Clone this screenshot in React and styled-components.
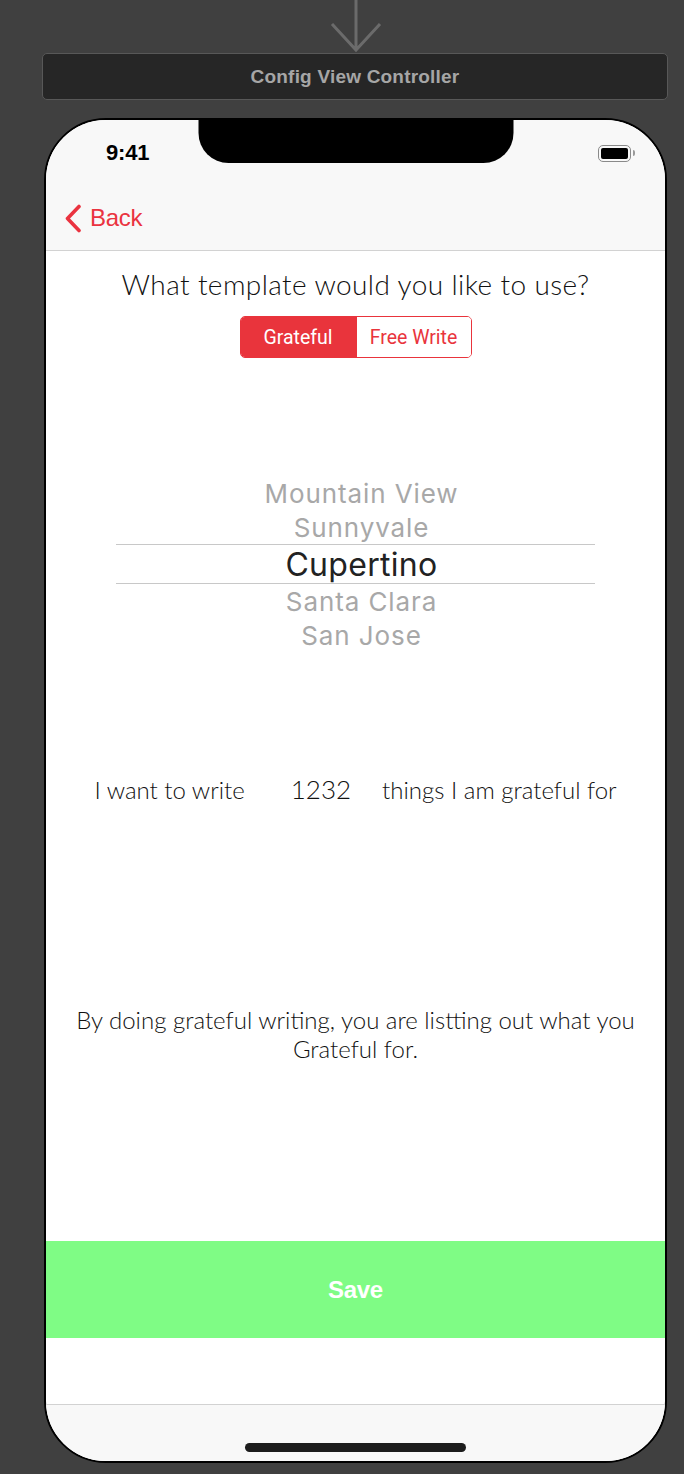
import React from 'react'
import styled, { createGlobalStyle } from 'styled-components'

const GlobalStyle = createGlobalStyle`
  html, body {
    margin: 0;
    padding: 0;
    background: #404040;
  }
  * { box-sizing: border-box; }
`;

const Canvas = styled.div`
  width: 684px;
  height: 1474px;
  display: flex;
  flex-direction: column;
  align-items: flex-start;
  padding-left: 42px;
  background: #404040;
  overflow: hidden;
`;

const ArrowWrap = styled.div`
  height: 53px;
  width: 626px;
  display: flex;
  justify-content: center;
  padding-left: 1px;
`;

const SceneTitle = styled.div`
  width: 626px;
  height: 47px;
  background: #262626;
  border: 1.5px solid #585858;
  border-radius: 5px;
  display: flex;
  align-items: center;
  justify-content: center;
  font-family: "Liberation Sans", Arial, sans-serif;
  font-weight: 700;
  font-size: 19px;
  letter-spacing: 0.2px;
  color: #a6a6a6;
`;

const Phone = styled.div`
  position: relative;
  margin-top: 18px;
  margin-left: 2px;
  width: 623px;
  height: 1345px;
  border: 2px solid #000;
  border-radius: 62px;
  background: #fff;
  overflow: hidden;
  display: flex;
  flex-direction: column;
`;

const Notch = styled.div`
  position: absolute;
  top: -2px;
  left: 50%;
  transform: translateX(-50%);
  width: 315px;
  height: 45px;
  background: #000;
  border-radius: 0 0 30px 30px;
`;

const Header = styled.header`
  background: #f8f8f8;
  border-bottom: 1px solid #d2d2d2;
  display: flex;
  flex-direction: column;
`;

const StatusBar = styled.div`
  height: 66px;
  display: flex;
  align-items: center;
  justify-content: space-between;
  padding: 0 34px 0 60px;
`;

const Time = styled.span`
  font-family: "Liberation Sans", Arial, sans-serif;
  font-weight: 700;
  font-size: 22px;
  color: #000;
  letter-spacing: -0.2px;
`;

const Battery = styled.div`
  position: relative;
  width: 33px;
  height: 17px;
  border: 1.5px solid #8a8a8a;
  border-radius: 5px;
  padding: 2px;
  &::after {
    content: '';
    position: absolute;
    right: -5px;
    top: 4px;
    width: 2px;
    height: 6px;
    border-radius: 0 2px 2px 0;
    background: #9a9a9a;
  }
`;

const BatteryFill = styled.div`
  width: 100%;
  height: 100%;
  background: #000;
  border-radius: 2px;
`;

const NavBar = styled.div`
  height: 64px;
  display: flex;
  align-items: center;
  padding-left: 18px;
`;

const BackButton = styled.div`
  display: flex;
  align-items: center;
  gap: 8px;
  color: #ea3340;
  font-family: "Liberation Sans", Arial, sans-serif;
  font-size: 24px;
  letter-spacing: -0.3px;
`;

const Main = styled.main`
  flex: 1;
  display: flex;
  flex-direction: column;
  align-items: center;
  padding-top: 17px;
`;

const Question = styled.h2`
  margin: 0;
  font-family: "Lato", "Liberation Sans", sans-serif;
  font-weight: 300;
  font-size: 28px;
  line-height: 32px;
  color: #111;
  letter-spacing: 0.4px;
`;

const Segmented = styled.div`
  margin-top: 16px;
  display: flex;
  width: 232px;
  height: 42px;
  border: 1.5px solid #e9343c;
  border-radius: 5px;
  overflow: hidden;
`;

const Segment = styled.div`
  flex: ${p => (p.$wide ? '0 0 116px' : '1')};
  display: flex;
  align-items: center;
  justify-content: center;
  font-family: Roboto, "Liberation Sans", sans-serif;
  font-size: 19.5px;
  background: ${p => (p.$active ? '#e9343c' : '#fff')};
  color: ${p => (p.$active ? '#fff' : '#e9343c')};
  border-right: ${p => (p.$active ? '1.5px solid #e9343c' : 'none')};
`;

const Picker = styled.div`
  margin-top: 118px;
  width: 479px;
  display: flex;
  flex-direction: column;
`;

const PickerRow = styled.div`
  height: ${p => (p.$selected ? '40px' : '34px')};
  display: flex;
  align-items: center;
  justify-content: center;
  padding-left: 12px;
  font-family: Inter, "Liberation Sans", sans-serif;
  font-size: ${p => (p.$selected ? '32px' : '26px')};
  letter-spacing: ${p => (p.$selected ? '0.3px' : '0.9px')};
  color: ${p => (p.$selected ? '#222' : '#a8a8a8')};
  border-top: ${p => (p.$selected ? '1px solid #c8c8c8' : 'none')};
  border-bottom: ${p => (p.$selected ? '1px solid #c8c8c8' : 'none')};
`;

const WriteRow = styled.div`
  margin-top: 122px;
  display: flex;
  align-items: center;
  height: 30px;
  font-family: "Lato", "Liberation Sans", sans-serif;
  font-weight: 300;
  font-size: 24px;
  color: #111;
`;

const Count = styled.span`
  margin: 0 31px 0 46px;
  font-size: 26px;
`;

const Description = styled.p`
  margin: 201px 0 0;
  width: 580px;
  text-align: center;
  font-family: "Lato", "Liberation Sans", sans-serif;
  font-weight: 300;
  font-size: 24px;
  line-height: 29px;
  color: #111;
`;

const SaveButton = styled.button`
  margin-top: auto;
  margin-bottom: 66px;
  width: 100%;
  height: 97px;
  border: none;
  background: #7ffc85;
  color: #fff;
  font-family: "Liberation Sans", Arial, sans-serif;
  font-weight: 700;
  font-size: 24px;
  letter-spacing: -0.3px;
`;

const Footer = styled.footer`
  height: 57px;
  background: #f8f8f8;
  border-top: 1px solid #d2d2d2;
  display: flex;
  justify-content: center;
  padding-top: 38px;
`;

const HomeIndicator = styled.div`
  width: 221px;
  height: 9px;
  border-radius: 5px;
  background: #1c1c1c;
`;

const cities = ['Mountain View', 'Sunnyvale', 'Cupertino', 'Santa Clara', 'San Jose'];

export default function App() {
  return (
    <>
      <GlobalStyle />
      <Canvas>
        <ArrowWrap>
          <svg width="60" height="53" viewBox="0 0 60 53">
            <path d="M30 0 V50 M6 24 L30 50 L54 24" fill="none" stroke="#6b6b6b" strokeWidth="3" />
          </svg>
        </ArrowWrap>
        <SceneTitle>Config View Controller</SceneTitle>
        <Phone>
          <Notch />
          <Header>
            <StatusBar>
              <Time>9:41</Time>
              <Battery><BatteryFill /></Battery>
            </StatusBar>
            <NavBar>
              <BackButton>
                <svg width="18" height="29" viewBox="0 0 18 29">
                  <path d="M15 2.5 L3.5 14.5 L15 26.5" fill="none" stroke="#ea3340" strokeWidth="3.6" strokeLinecap="round" strokeLinejoin="round" />
                </svg>
                Back
              </BackButton>
            </NavBar>
          </Header>
          <Main>
            <Question>What template would you like to use?</Question>
            <Segmented>
              <Segment $active $wide>Grateful</Segment>
              <Segment>Free Write</Segment>
            </Segmented>
            <Picker>
              {cities.map(c => (
                <PickerRow key={c} $selected={c === 'Cupertino'}>{c}</PickerRow>
              ))}
            </Picker>
            <WriteRow>
              <span>I want to write</span>
              <Count>1232</Count>
              <span>things I am grateful for</span>
            </WriteRow>
            <Description>
              By doing grateful writing, you are listting out what you Grateful for.
            </Description>
            <SaveButton>Save</SaveButton>
          </Main>
          <Footer>
            <HomeIndicator />
          </Footer>
        </Phone>
      </Canvas>
    </>
  )
}
